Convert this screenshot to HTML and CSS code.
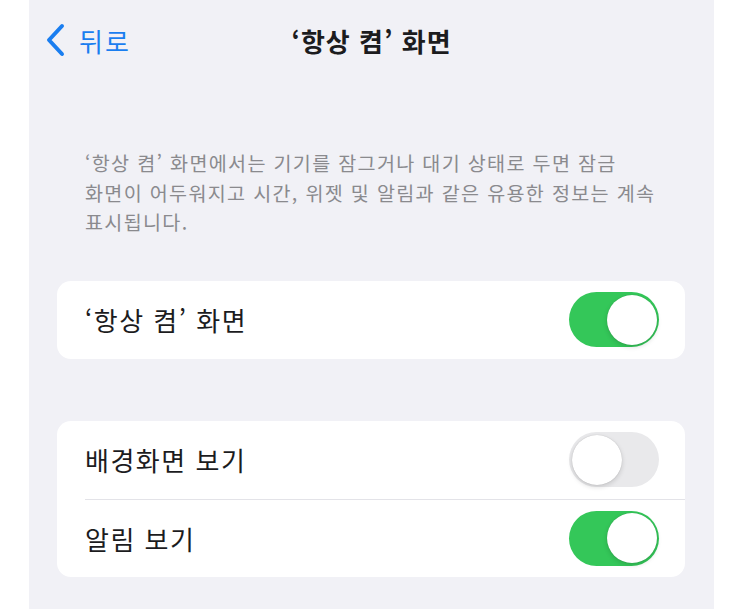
FILE: index.html
```html
<!DOCTYPE html>
<html lang="ko">
<head>
    <meta charset="UTF-8">
    <title>'항상 켬' 화면</title>
    <link rel="stylesheet" href="styles.css">
</head>
<body>
<div id="screen">
    <div class="nav">
        <a class="back" href="javascript:;">
            <svg class="chevron" width="22" height="34" viewBox="0 0 22 34">
                <path d="M18 3 L5 17 L18 31" fill="none" stroke="#1a7ef0" stroke-width="4" stroke-linecap="round" stroke-linejoin="round"/>
            </svg>
            <span>뒤로</span>
        </a>
        <h1 class="title">‘항상 켬’ 화면</h1>
        <div></div>
    </div>

    <p class="desc">‘항상 켬’ 화면에서는 기기를 잠그거나 대기 상태로 두면 잠금<br>화면이 어두워지고 시간, 위젯 및 알림과 같은 유용한 정보는 계속<br>표시됩니다.</p>

    <div class="group">
        <div class="row">
            <span class="label">‘항상 켬’ 화면</span>
            <span class="toggle on"><i></i></span>
        </div>
    </div>

    <div class="group group-two">
        <div class="row">
            <span class="label">배경화면 보기</span>
            <span class="toggle"><i></i></span>
        </div>
        <div class="row">
            <span class="label">알림 보기</span>
            <span class="toggle on"><i></i></span>
        </div>
    </div>
</div>

<script type="text/javascript">
    var toggles = document.querySelectorAll('#screen .toggle');
    for (var i = 0; i < toggles.length; i++) {
        toggles[i].onclick = function () {
            this.classList.toggle('on');
        }
    }
</script>
</body>
</html>
```

FILE: styles.css
```css
*{
    padding: 0;
    margin: 0;
    box-sizing: border-box;
}
body{
    background-color: #fff;
    font-family: "Noto Sans CJK KR", "Noto Sans", sans-serif;
}
#screen{
    margin-left: 29px;
    width: 685px;
    height: 609px;
    background-color: #f1f1f6;
    overflow: hidden;
}
#screen .nav{
    height: 80px;
    display: grid;
    grid-template-columns: 1fr auto 1fr;
    align-items: center;
    padding: 0 15px;
}
#screen .back{
    display: flex;
    align-items: center;
    gap: 13px;
    color: #1a7ef0;
    text-decoration: none;
    font-size: 26px;
    letter-spacing: 2px;
}
#screen .chevron{
    display: block;
}
#screen .title{
    font-size: 26px;
    font-weight: 700;
    color: #1c1c1e;
    letter-spacing: 1px;
}
#screen .desc{
    margin: 68px 0 0 56px;
    font-size: 19.6px;
    line-height: 29.5px;
    color: #8a8a8e;
    letter-spacing: 1.3px;
}
#screen .group{
    margin: 44px 29px 0 28px;
    background-color: #fff;
    border-radius: 14px;
    overflow: hidden;
}
#screen .group-two{
    margin-top: 62px;
}
#screen .row{
    height: 78px;
    display: flex;
    align-items: center;
    justify-content: space-between;
    padding: 0 26px 0 28px;
}
#screen .group-two .row + .row{
    border-top: 1px solid #e3e3e8;
    margin-left: 28px;
    padding-left: 0;
}
#screen .label{
    font-size: 26px;
    color: #1c1c1e;
    letter-spacing: 1.5px;
}
#screen .toggle{
    width: 90px;
    height: 55px;
    border-radius: 28px;
    background-color: #e9e9eb;
    padding: 2.5px;
    display: flex;
    cursor: pointer;
}
#screen .toggle i{
    width: 50px;
    height: 50px;
    border-radius: 50%;
    background-color: #fff;
    box-shadow: 0 2px 5px rgba(0,0,0,0.15), 0 0 1px rgba(0,0,0,0.2);
}
#screen .toggle.on{
    background-color: #34c759;
    justify-content: flex-end;
}
```
